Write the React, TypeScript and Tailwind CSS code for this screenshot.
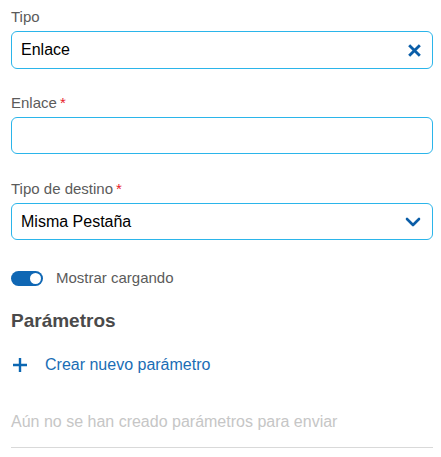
import React, { useState } from 'react';

function Label({ text, required }: { text: string; required?: boolean }) {
  return (
    <div className="h-[20px] leading-[20px] text-[15px] text-[#5b5b5b]">
      {text}
      {required && <span className="ml-[3px] text-[#e8202a]">*</span>}
    </div>
  );
}

function XIcon() {
  return (
    <svg width="13" height="13" viewBox="0 0 12 12" className="text-[#0b5ea8]">
      <path d="M2 2L10 10M10 2L2 10" stroke="currentColor" strokeWidth="2.6" strokeLinecap="square" />
    </svg>
  );
}

function ChevronDown() {
  return (
    <svg width="16" height="10" viewBox="0 0 16 10" className="text-[#0b5ea8]">
      <path d="M2 2L8 8L14 2" fill="none" stroke="currentColor" strokeWidth="2.6" strokeLinecap="round" strokeLinejoin="round" />
    </svg>
  );
}

export default function App() {
  const [loading, setLoading] = useState(true);

  return (
    <div className="w-[441px] h-[457px] bg-white px-[11px] pr-[8px] pt-[7px] overflow-hidden" style={{ fontFamily: '"Liberation Sans", Arial, sans-serif' }}>
      <div className="flex flex-col gap-[4px]">
        <Label text="Tipo" />
        <div className="h-[38px] border border-[#2bb5ea] rounded-[6px] flex items-center justify-between pl-[9px] pr-[11px]">
          <span className="text-[16px] text-black">Enlace</span>
          <XIcon />
        </div>
      </div>

      <div className="mt-[24px] flex flex-col gap-[4px]">
        <Label text="Enlace" required />
        <div className="h-[37px] border border-[#2bb5ea] rounded-[6px]" />
      </div>

      <div className="mt-[25px] flex flex-col gap-[4px]">
        <Label text="Tipo de destino" required />
        <div className="h-[37px] border border-[#2bb5ea] rounded-[6px] flex items-center justify-between pl-[9px] pr-[11px]">
          <span className="text-[16px] text-black">Misma Pestaña</span>
          <ChevronDown />
        </div>
      </div>

      <div className="mt-[30px] flex items-center gap-[13px] h-[16px]">
        <button
          onClick={() => setLoading(!loading)}
          className={`w-[32px] h-[15px] rounded-full flex items-center px-[2px] ${loading ? 'bg-[#0f67b4] justify-end' : 'bg-[#c4c4c4] justify-start'}`}
        >
          <span className="w-[11px] h-[11px] rounded-full bg-white" />
        </button>
        <span className="text-[15px] text-[#5b5b5b]">Mostrar cargando</span>
      </div>

      <div className="mt-[24px] text-[19px] font-bold text-[#4a4a4a] leading-[22px]">Parámetros</div>

      <div className="mt-[23px] flex items-center h-[20px]">
        <svg width="16" height="16" viewBox="0 0 16 16" className="ml-[1px] text-[#0b67b2]">
          <path d="M8 1V15M1 8H15" stroke="currentColor" strokeWidth="2.4" />
        </svg>
        <span className="ml-[17px] text-[16px] text-[#1a6db5]">Crear nuevo parámetro</span>
      </div>

      <div className="mt-[37px] text-[16px] text-[#c6c6c6] leading-[20px]">Aún no se han creado parámetros para enviar</div>

      <div className="mt-[15px] h-px bg-[#d9d9d9]" />
    </div>
  );
}
